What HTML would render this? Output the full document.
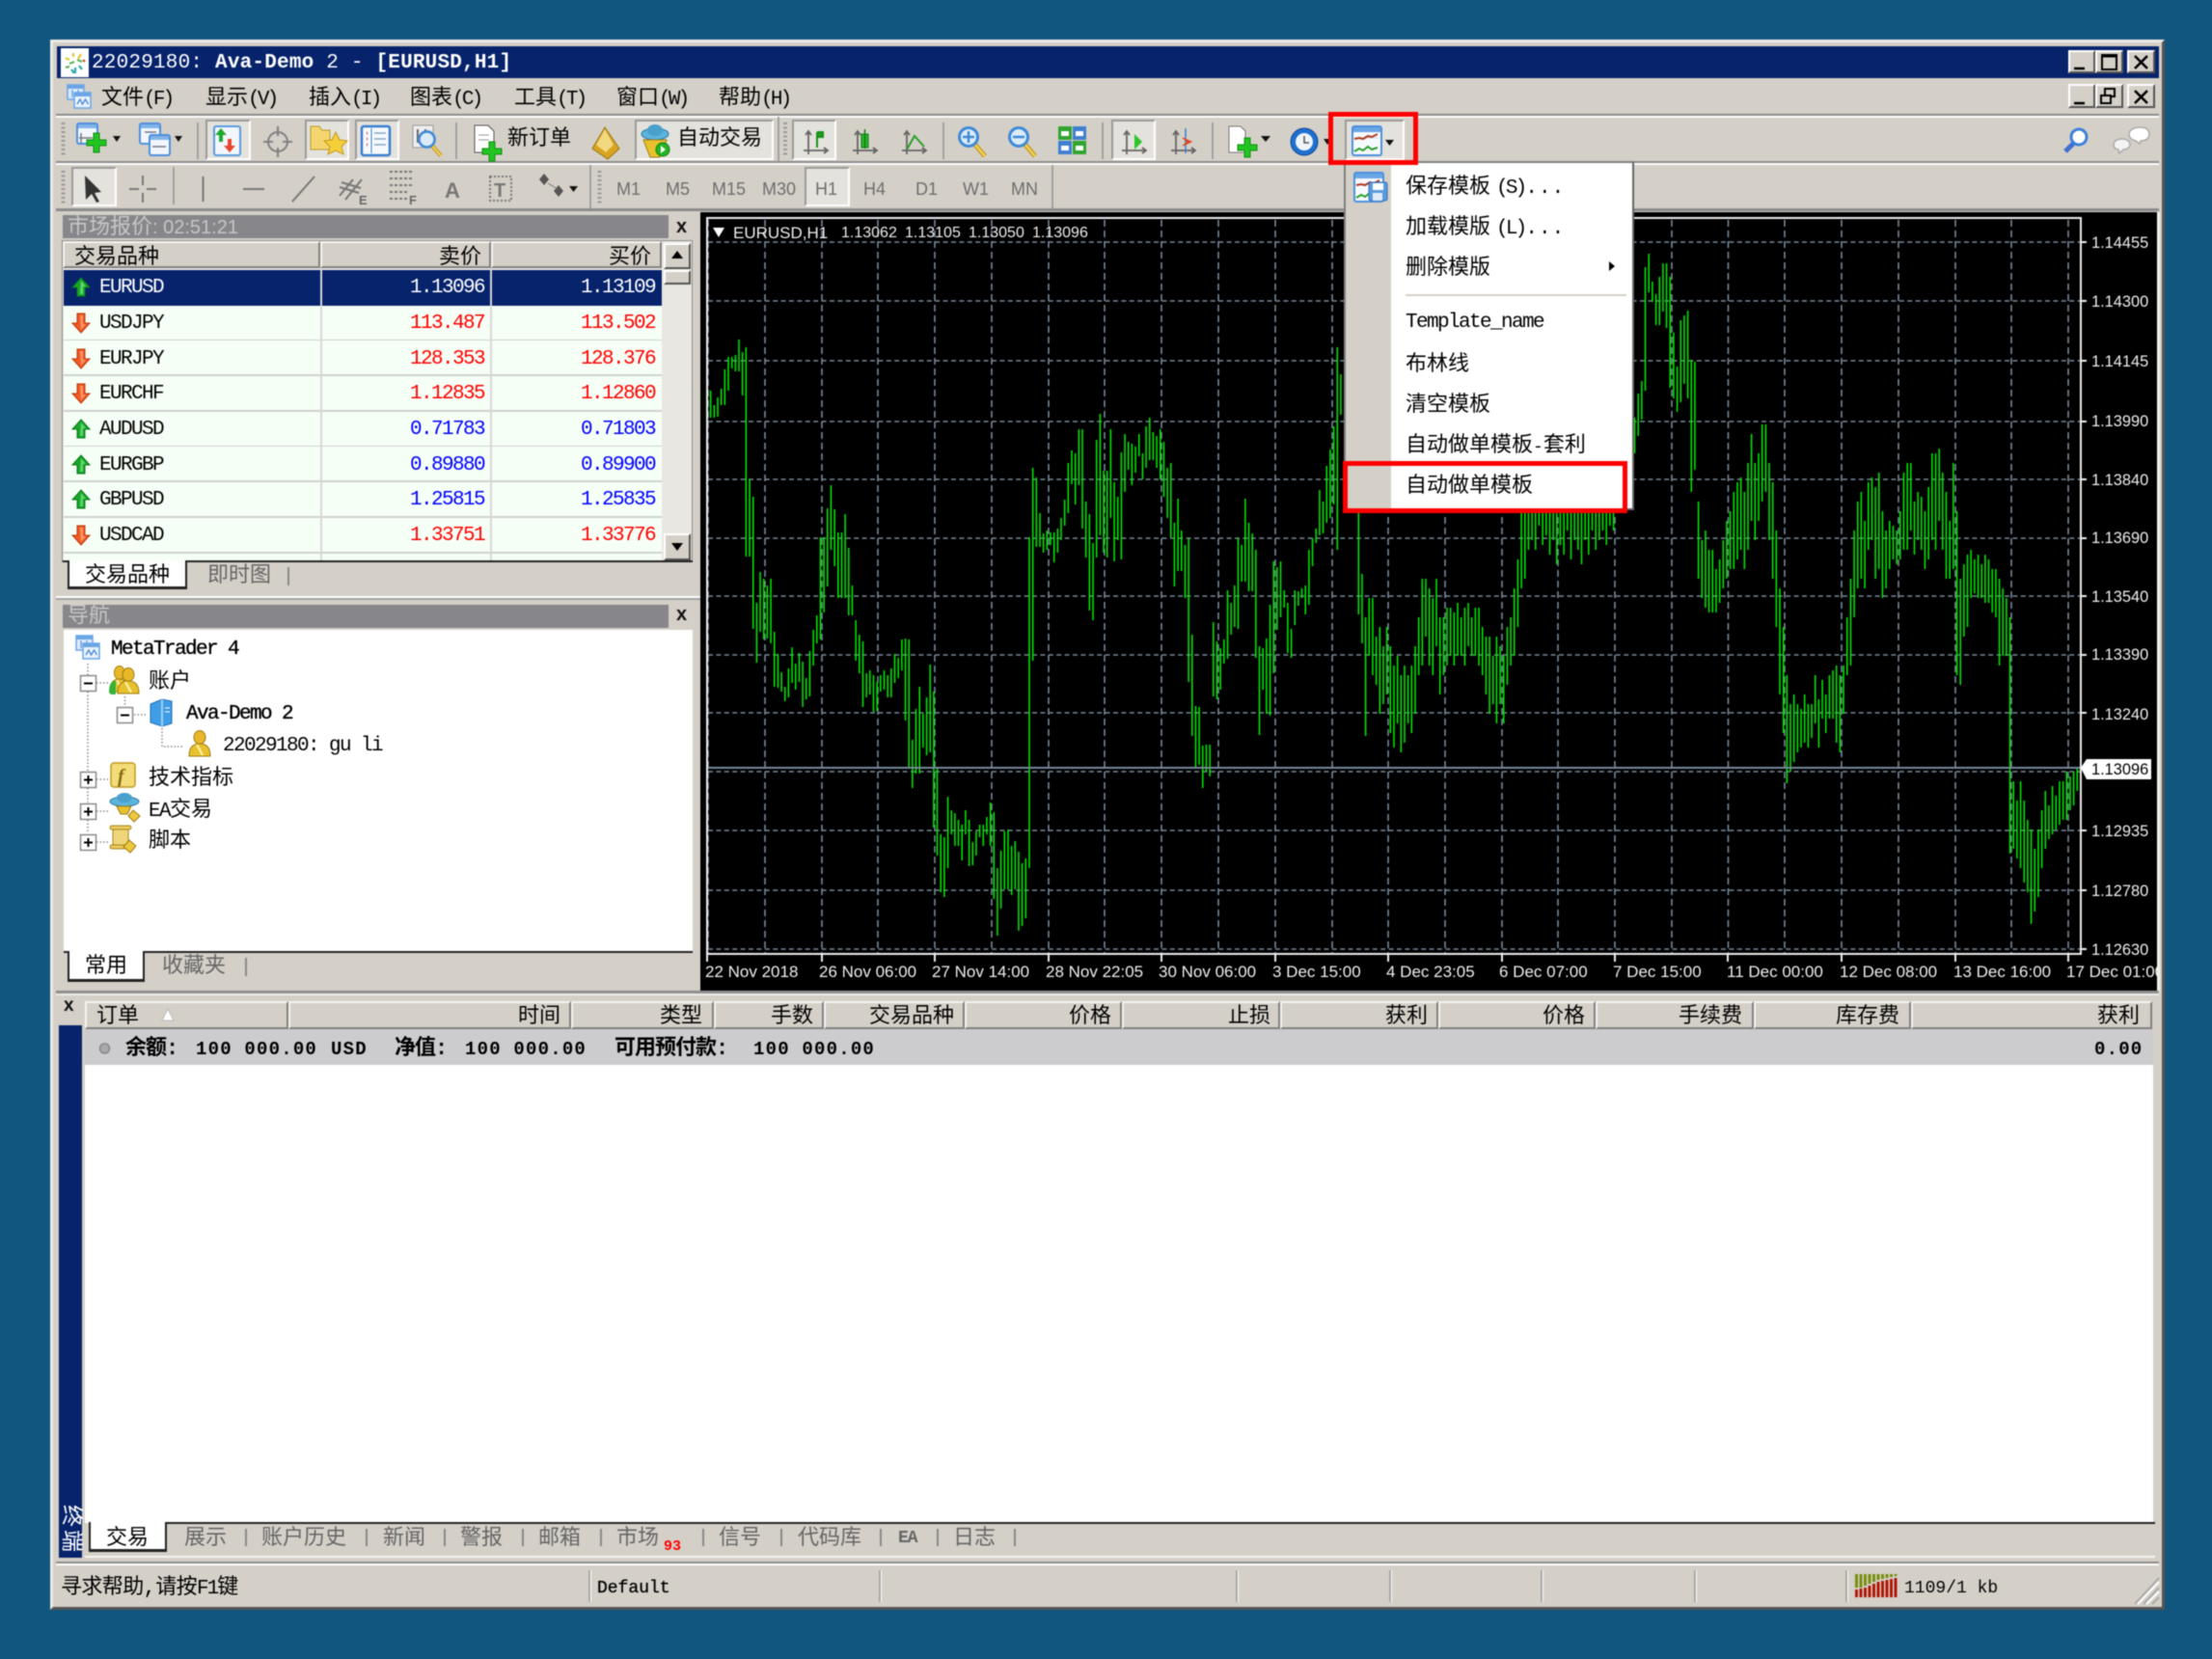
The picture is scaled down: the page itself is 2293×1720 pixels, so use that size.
<!DOCTYPE html>
<html lang="zh">
<head>
<meta charset="utf-8">
<title>MetaTrader 4</title>
<style>
html,body{margin:0;padding:0;width:2293px;height:1720px;overflow:hidden;background:#10567f}
#w{position:absolute;left:0;top:0;width:2293px;height:1720px;overflow:hidden;filter:blur(.45px)}
.a{position:absolute;box-sizing:border-box}
.t{position:absolute;white-space:nowrap;line-height:26px;font-size:22px;margin-top:2.5px;font-family:"Liberation Mono","Noto Sans CJK SC",monospace;color:#000}
.l{font-size:21px;letter-spacing:-1.6px}
.k{letter-spacing:-2.8px}
.g{color:#666}
.r{transform:translateX(-100%)}
.s{font-family:"Liberation Sans","Noto Sans CJK SC",sans-serif;font-size:17px;color:#eee}
.t.s{margin-top:.5px}
.m{font-family:"Liberation Sans",sans-serif;font-size:18px;color:#6e6e6e}
.t.m{margin-top:0}
.sb{font-weight:normal;-webkit-text-stroke:.35px #000}
.h{position:absolute;box-sizing:border-box;background:#d4d0c8;border-top:2px solid #f4f3f0;border-left:2px solid #f4f3f0;border-right:2px solid #808080;border-bottom:2px solid #808080}
.p{position:absolute;box-sizing:border-box;background:#e4e2dc;border-top:2px solid #9a9a9a;border-left:2px solid #9a9a9a;border-right:2px solid #fff;border-bottom:2px solid #fff}
.b{position:absolute;box-sizing:border-box;background:#d4d0c8;border-top:2px solid #fff;border-left:2px solid #fff;border-right:2px solid #555;border-bottom:2px solid #555}
.row{position:absolute;left:66px;width:620px;height:37px;background:#f6fff6;border-bottom:2px solid #d0d0d0;box-sizing:border-box}
.v{position:absolute;width:2px;background:#a8a8a8;border-right:1px solid #fff}
.tab{position:absolute;box-sizing:border-box;background:#fff;border-left:2px solid #222;border-right:2px solid #222;border-bottom:3px solid #222}
.x{position:absolute;font:bold 20px/20px "Liberation Sans",sans-serif;color:#111}
</style>
</head>
<body>
<div id="w">
<!-- window -->
<div class="a" style="left:52px;top:41px;width:2192px;height:1628px;background:#d4d0c8;border-top:3px solid #eceae6;border-left:3px solid #eceae6;border-right:3px solid #555;border-bottom:3px solid #555"></div>
<!-- title -->
<div class="a" style="left:59px;top:48px;width:2179px;height:33px;background:#07236b"></div>
<div class="a" style="left:63px;top:50px;width:29px;height:30px;background:#fff"></div>
<div class="t" style="left:95px;top:50px;color:#fff;font-size:21px;letter-spacing:.2px">22029180: <b>Ava-Demo</b> 2 - <b>[EURUSD,H1]</b></div>
<!-- window buttons -->
<div class="b" style="left:2144px;top:52px;width:28px;height:24px"></div>
<div class="b" style="left:2172px;top:52px;width:29px;height:24px"></div>
<div class="b" style="left:2205px;top:52px;width:29px;height:24px"></div>
<div class="b" style="left:2144px;top:87px;width:28px;height:25px"></div>
<div class="b" style="left:2172px;top:87px;width:29px;height:25px"></div>
<div class="b" style="left:2205px;top:87px;width:29px;height:25px"></div>
<!-- menu bar -->
<div class="t" style="left:105px;top:87px">文件<span class="l k">(F)</span></div>
<div class="t" style="left:213px;top:87px">显示<span class="l k">(V)</span></div>
<div class="t" style="left:320px;top:87px">插入<span class="l k">(I)</span></div>
<div class="t" style="left:425px;top:87px">图表<span class="l k">(C)</span></div>
<div class="t" style="left:533px;top:87px">工具<span class="l k">(T)</span></div>
<div class="t" style="left:639px;top:87px">窗口<span class="l k">(W)</span></div>
<div class="t" style="left:745px;top:87px">帮助<span class="l k">(H)</span></div>
<!-- grooves -->
<div class="a" style="left:58px;top:118px;width:2180px;height:2px;background:#8c8c8c"></div>
<div class="a" style="left:58px;top:120px;width:2180px;height:2px;background:#fff"></div>
<div class="a" style="left:58px;top:167px;width:2180px;height:2px;background:#8c8c8c"></div>
<div class="a" style="left:58px;top:169px;width:2180px;height:2px;background:#fff"></div>
<!-- pressed buttons -->
<div class="p" style="left:213px;top:124px;width:47px;height:42px"></div>
<div class="p" style="left:316px;top:124px;width:46px;height:42px"></div>
<div class="p" style="left:368px;top:124px;width:46px;height:42px"></div>
<div class="p" style="left:658px;top:124px;width:144px;height:42px"></div>
<div class="p" style="left:821px;top:124px;width:46px;height:42px"></div>
<div class="p" style="left:1152px;top:124px;width:46px;height:42px"></div>
<div class="p" style="left:1394px;top:124px;width:62px;height:42px"></div>
<div class="p" style="left:74px;top:173px;width:47px;height:41px"></div>
<div class="p" style="left:834px;top:173px;width:47px;height:41px"></div>
<div class="t" style="left:526px;top:129px">新订单</div>
<div class="t" style="left:702px;top:129px">自动交易</div>
<!-- timeframes -->
<div class="t m" style="left:639px;top:183px">M1</div>
<div class="t m" style="left:690px;top:183px">M5</div>
<div class="t m" style="left:738px;top:183px">M15</div>
<div class="t m" style="left:790px;top:183px">M30</div>
<div class="t m" style="left:845px;top:183px">H1</div>
<div class="t m" style="left:895px;top:183px">H4</div>
<div class="t m" style="left:949px;top:183px">D1</div>
<div class="t m" style="left:998px;top:183px">W1</div>
<div class="t m" style="left:1048px;top:183px">MN</div>
<div class="a" style="left:58px;top:216px;width:2180px;height:3px;background:#8c8c8c"></div>

<!-- market watch -->
<div class="a" style="left:65px;top:223px;width:628px;height:24px;background:#87868a"></div>
<div class="t" style="left:70px;top:220px;color:#c6c6c6">市场报价<span class="s" style="font-size:20px;color:#c6c6c6">: 02:51:21</span></div>
<div class="x" style="left:701px;top:225px">x</div>
<div class="a" style="left:64px;top:249px;width:654px;height:334px;background:#e9e7e2;border:1px solid #8a8a8a"></div>
<div class="h" style="left:65px;top:250px;width:267px;height:28px"></div>
<div class="h" style="left:332px;top:250px;width:177px;height:28px"></div>
<div class="h" style="left:509px;top:250px;width:177px;height:28px"></div>
<div class="t" style="left:77px;top:252px">交易品种</div>
<div class="t r" style="left:499px;top:252px">卖价</div>
<div class="t r" style="left:675px;top:252px">买价</div>
<div class="a" style="left:66px;top:280px;width:620px;height:37px;background:#07236b"></div>
<div class="row" style="top:317px"></div>
<div class="row" style="top:353px"></div>
<div class="row" style="top:390px"></div>
<div class="row" style="top:427px"></div>
<div class="row" style="top:463px"></div>
<div class="row" style="top:500px"></div>
<div class="row" style="top:537px"></div>
<div class="a" style="left:66px;top:574px;width:620px;height:8px;background:#f6fff6"></div>
<div class="a" style="left:332px;top:278px;width:2px;height:304px;background:#d8d8d8"></div>
<div class="a" style="left:508px;top:278px;width:2px;height:304px;background:#d8d8d8"></div>
<div class="b" style="left:688px;top:252px;width:28px;height:27px"></div>
<div class="b" style="left:688px;top:280px;width:28px;height:15px"></div>
<div class="b" style="left:688px;top:553px;width:28px;height:28px"></div>

<div class="t l" style="left:103px;top:283px;color:#fff">EURUSD</div>
<div class="t l" style="left:103px;top:320px">USDJPY</div>
<div class="t l" style="left:103px;top:357px">EURJPY</div>
<div class="t l" style="left:103px;top:393px">EURCHF</div>
<div class="t l" style="left:103px;top:430px">AUDUSD</div>
<div class="t l" style="left:103px;top:467px">EURGBP</div>
<div class="t l" style="left:103px;top:503px">GBPUSD</div>
<div class="t l" style="left:103px;top:540px">USDCAD</div>

<div class="t l r" style="left:502px;top:283px;color:#fff">1.13096</div><div class="t l r" style="left:679px;top:283px;color:#fff">1.13109</div>
<div class="t l r" style="left:502px;top:320px;color:#f00">113.487</div><div class="t l r" style="left:679px;top:320px;color:#f00">113.502</div>
<div class="t l r" style="left:502px;top:357px;color:#f00">128.353</div><div class="t l r" style="left:679px;top:357px;color:#f00">128.376</div>
<div class="t l r" style="left:502px;top:393px;color:#f00">1.12835</div><div class="t l r" style="left:679px;top:393px;color:#f00">1.12860</div>
<div class="t l r" style="left:502px;top:430px;color:#00f">0.71783</div><div class="t l r" style="left:679px;top:430px;color:#00f">0.71803</div>
<div class="t l r" style="left:502px;top:467px;color:#00f">0.89880</div><div class="t l r" style="left:679px;top:467px;color:#00f">0.89900</div>
<div class="t l r" style="left:502px;top:503px;color:#00f">1.25815</div><div class="t l r" style="left:679px;top:503px;color:#00f">1.25835</div>
<div class="t l r" style="left:502px;top:540px;color:#f00">1.33751</div><div class="t l r" style="left:679px;top:540px;color:#f00">1.33776</div>

<div class="a" style="left:65px;top:581px;width:653px;height:2px;background:#222"></div>
<div class="tab" style="left:70px;top:581px;width:124px;height:30px"></div>
<div class="t" style="left:88px;top:582px">交易品种</div>
<div class="t g" style="left:215px;top:582px">即时图</div>
<div class="a" style="left:298px;top:588px;width:2px;height:19px;background:#888"></div>
<div class="a" style="left:58px;top:618px;width:668px;height:2px;background:#fff"></div>
<div class="a" style="left:58px;top:620px;width:668px;height:2px;background:#a0a0a0"></div>

<!-- navigator -->
<div class="a" style="left:65px;top:627px;width:628px;height:24px;background:#87868a"></div>
<div class="t" style="left:70px;top:624px;color:#c6c6c6">导航</div>
<div class="x" style="left:701px;top:627px">x</div>
<div class="a" style="left:66px;top:653px;width:652px;height:334px;background:#fff"></div>
<div class="t l sb" style="left:115px;top:658px">MetaTrader 4</div>
<div class="t" style="left:154px;top:692px">账户</div>
<div class="t l sb" style="left:193px;top:725px">Ava-Demo 2</div>
<div class="t l" style="left:231px;top:758px">22029180: gu li</div>
<div class="t" style="left:154px;top:792px">技术指标</div>
<div class="t" style="left:154px;top:825px"><span class="l">EA</span>交易</div>
<div class="t" style="left:154px;top:857px">脚本</div>
<div class="a" style="left:66px;top:986px;width:652px;height:2px;background:#222"></div>
<div class="tab" style="left:70px;top:986px;width:80px;height:32px"></div>
<div class="t" style="left:88px;top:987px">常用</div>
<div class="t g" style="left:168px;top:987px">收藏夹</div>
<div class="a" style="left:254px;top:993px;width:2px;height:19px;background:#888"></div>

<!-- chart -->
<div class="a" style="left:726px;top:220px;width:1510px;height:807px;background:#000"></div>
<div class="a" style="left:2236px;top:220px;width:3px;height:810px;background:#f2f1ee"></div>
<div class="a" style="left:58px;top:1027px;width:2180px;height:3px;background:#8f8f8f"></div>
<div class="a" style="left:58px;top:1030px;width:2180px;height:2px;background:#eeece8"></div>
<svg class="a" style="left:0;top:0" width="2293" height="1720" viewBox="0 0 2293 1720">
<g fill="none" stroke="#778899" stroke-width="1.6">
<path stroke-dasharray="7 4" d="M734 228V989M793 228V989M852 228V989M910 228V989M969 228V989M1028 228V989M1087 228V989M1145 228V989M1204 228V989M1263 228V989M1322 228V989M1381 228V989M1439 228V989M1498 228V989M1557 228V989M1615 228V989M1674 228V989M1733 228V989M1791.500 228V989M1850 228V989M1909 228V989M1968 228V989M2027 228V989M2085 228V989M2144 228V989"/>
<path stroke-dasharray="5 3.4" d="M734 251H2157M734 312H2157M734 374H2157M734 437H2157M734 497H2157M734 558H2157M734 618H2157M734 679H2157M734 739H2157M734 800H2157M734 861H2157M734 923H2157M734 984H2157"/>
</g>
<path transform="translate(733,0) scale(3.67,1)" fill="none" stroke="#00e800" stroke-width=".42" d="M0 407V437M1 405V433M2 420V433M3 412V432M4 403V420M5 383V420M6 370V405M7 370V382M8 368V385M9 352V385M10 365V410M11 360V577M12 497V577M13 515V652M14 625V687M15 593V655M16 600V663M17 607V662M18 600V667M19 655V712M20 678V713M21 697V717M22 712V727M23 693V723M24 671V708M25 688V715M26 677V707M27 686V733M28 703V725M29 675V722M30 653V690M31 638V667M32 557V663M33 557V635M34 527V608M35 503V570M36 528V587M37 552V620M38 552V620M39 533V620M40 568V638M41 607V638M42 643V685M43 658V698M44 665V733M45 698V723M46 695V720M47 700V738M48 707V737M49 700V717M50 695V715M51 700V723M52 693V723M53 678V708M54 682V703M55 663V695M56 662V747M57 663V797M58 767V817M59 735V802M60 712V802M61 740V775M62 723V783M63 689V780M64 717V858M65 797V887M66 865V925M67 868V930M68 826V900M69 840V865M70 843V877M71 850V877M72 855V892M73 840V865M74 850V898M75 873V897M76 862V887M77 855V868M78 855V877M79 847V865M80 832V877M81 842V932M82 900V970M83 882V942M84 862V922M85 860V922M86 877V928M87 872V922M88 883V965M89 895V960M90 890V952M91 557V900M92 485V685M93 495V567M94 532V567M95 553V573M96 550V570M97 552V565M98 552V583M99 548V573M100 537V560M101 518V545M102 480V532M103 467V502M104 470V523M105 445V503M106 445V548M107 520V578M108 533V633M109 563V643M110 456V578M111 429V555M112 488V573M113 488V578M114 445V537M115 500V582M116 515V560M117 469V580M118 450V510M119 458V487M120 460V503M121 463V490M122 450V473M123 470V497M124 442V485M125 433V477M126 448V477M127 452V485M128 445V497M129 458V515M130 485V537M131 480V557M132 542V608M133 517V592M134 550V592M135 565V620M136 558V707M137 658V763M138 732V795M139 733V793M140 773V817M141 772V800M142 772V805M143 645V722M144 665V725M145 672V715M146 663V688M147 612V683M148 625V658M149 607V650M150 558V652M151 565V603M152 517V603M153 542V613M154 553V613M155 570V682M156 670V762M157 672V715M158 662V740M159 627V742M160 582V698M161 588V653M162 582V640M163 612V630M164 625V677M165 652V682M166 612V648M167 613V628M168 610V620M169 607V637M170 570V627M171 558V587M172 548V563M173 508V555M174 520V553M175 483V542M176 466V537M177 442V523M178 360V570M179 388V430M184 527V637M185 595V667M186 640V763M187 620V680M188 620V700M189 660V710M190 650V740M191 670V730M192 650V720M193 670V760M194 690V775M195 680V750M196 700V780M197 690V770M198 700V750M199 690V760M200 670V740M201 640V700M202 600V690M203 600V660M204 610V690M205 620V700M206 600V670M207 640V720M208 640V700M209 630V690M210 630V680M211 635V690M212 625V680M213 640V680M214 630V690M215 625V670M216 640V680M217 630V680M218 630V690M219 650V700M220 660V720M221 660V740M222 680V730M223 660V750M224 670V730M225 680V750M226 650V710M227 640V690M228 610V680M229 580V650M230 530V610M231 528V600M232 528V570M233 528V560M234 528V570M235 528V545M236 528V565M237 528V555M238 528V575M239 528V560M240 528V585M241 528V565M242 528V575M243 528V550M244 528V580M245 528V560M246 528V570M247 528V585M248 528V560M249 528V575M250 528V550M251 528V570M252 528V560M253 528V550M254 528V565M255 528V545M256 528V550M262 433V470M263 408V452M264 395V435M265 277V405M266 263V303M267 292V313M268 305V337M269 287V337M270 273V323M271 273V340M272 287V402M273 345V413M274 380V427M275 332V417M276 327V398M277 322V413M278 373V510M279 375V487M280 520V600M281 560V620M282 550V630M283 570V635M284 570V635M285 590V635M286 580V625M287 560V610M288 540V600M289 530V590M290 510V590M291 500V580M292 495V570M293 510V590M294 480V570M295 450V540M296 480V560M297 470V540M298 440V520M299 440V510M300 480V560M301 500V600M302 550V650M303 610V720M304 650V760M305 700V812M306 730V800M307 720V790M308 730V780M309 735V775M310 720V770M311 730V775M312 730V765M313 700V750M314 725V775M315 705V745M316 720V760M317 700V745M318 695V745M319 690V770M320 700V780M321 690V740M322 640V700M323 600V690M324 550V640M325 520V610M326 510V600M327 540V610M328 500V570M329 495V560M330 505V600M331 490V590M332 530V620M333 550V610M334 540V590M335 545V580M336 550V585M337 530V580M338 490V570M339 480V570M340 480V550M341 520V575M342 510V560M343 515V570M344 530V590M345 505V580M346 470V560M347 470V570M348 465V540M349 490V570M350 510V600M351 540V600M352 480V590M353 530V700M354 600V710M355 585V660M356 575V650M357 570V620M358 580V615M359 575V620M360 585V620M361 575V625M362 580V625M363 590V635M364 590V640M365 600V690M366 610V680M367 620V680M368 640V885M369 810V880M370 830V890M371 810V900M372 830V915M373 850V925M374 860V958M375 880V945M376 860V930M377 840V900M378 820V880M379 835V870M380 815V865M381 825V860M382 810V855M383 810V850M384 800V850M385 805V840M386 800V835M387 795V820"/>
<path stroke="#778899" stroke-width="2" d="M734 796H2157"/>
<rect x="733" y="226" width="1424" height="763" fill="none" stroke="#ededed" stroke-width="2"/>
<path stroke="#eee" stroke-width="2" d="M733 989V997M852 989V997M969 989V997M1087 989V997M1204 989V997M1322 989V997M1439 989V997M1557 989V997M1674 989V997M1791 989V997M1909 989V997M2027 989V997M2144 989V997M2157 251h6M2157 312h6M2157 374h6M2157 437h6M2157 497h6M2157 558h6M2157 618h6M2157 679h6M2157 739h6M2157 861h6M2157 923h6M2157 984h6"/>
<polygon points="739,236 751,236 745,246" fill="#fff"/>
<polygon points="2157,796 2163,787 2230,787 2230,808 2163,808" fill="#fff"/>
</svg>
<div class="t s" style="left:760px;top:228px">EURUSD,H1</div>
<div class="t s" style="left:872px;top:228px;font-size:16px">1.13062</div>
<div class="t s" style="left:938px;top:228px;font-size:16px">1.13105</div>
<div class="t s" style="left:1004px;top:228px;font-size:16px">1.13050</div>
<div class="t s" style="left:1070px;top:228px;font-size:16px">1.13096</div>

<div class="t s" style="left:2168px;top:238px;font-size:16.4px">1.14455</div>
<div class="t s" style="left:2168px;top:299px;font-size:16.4px">1.14300</div>
<div class="t s" style="left:2168px;top:361px;font-size:16.4px">1.14145</div>
<div class="t s" style="left:2168px;top:423px;font-size:16.4px">1.13990</div>
<div class="t s" style="left:2168px;top:484px;font-size:16.4px">1.13840</div>
<div class="t s" style="left:2168px;top:544px;font-size:16.4px">1.13690</div>
<div class="t s" style="left:2168px;top:605px;font-size:16.4px">1.13540</div>
<div class="t s" style="left:2168px;top:665px;font-size:16.4px">1.13390</div>
<div class="t s" style="left:2168px;top:727px;font-size:16.4px">1.13240</div>
<div class="t s" style="left:2168px;top:784px;font-size:16.4px;color:#000">1.13096</div>
<div class="t s" style="left:2168px;top:848px;font-size:16.4px">1.12935</div>
<div class="t s" style="left:2168px;top:910px;font-size:16.4px">1.12780</div>
<div class="t s" style="left:2168px;top:971px;font-size:16.4px">1.12630</div>

<div class="t s" style="left:731px;top:994px">22 Nov 2018</div>
<div class="t s" style="left:849px;top:994px">26 Nov 06:00</div>
<div class="t s" style="left:966px;top:994px">27 Nov 14:00</div>
<div class="t s" style="left:1084px;top:994px">28 Nov 22:05</div>
<div class="t s" style="left:1201px;top:994px">30 Nov 06:00</div>
<div class="t s" style="left:1319px;top:994px">3 Dec 15:00</div>
<div class="t s" style="left:1437px;top:994px">4 Dec 23:05</div>
<div class="t s" style="left:1554px;top:994px">6 Dec 07:00</div>
<div class="t s" style="left:1672px;top:994px">7 Dec 15:00</div>
<div class="t s" style="left:1790px;top:994px">11 Dec 00:00</div>
<div class="t s" style="left:1907px;top:994px">12 Dec 08:00</div>
<div class="t s" style="left:2025px;top:994px">13 Dec 16:00</div>
<div class="a" style="left:2142px;top:994px;width:94px;height:26px;overflow:hidden"><div class="t s" style="left:0;top:0">17 Dec 01:00</div></div>

<!-- terminal -->
<div class="x" style="left:66px;top:1033px;font-size:19px">x</div>
<div class="a" style="left:61px;top:1063px;width:24px;height:552px;background:#07236b"></div>
<div class="t" style="left:61px;top:1560px;width:24px;height:54px;color:#fff;font-size:23px;line-height:24px;margin-top:0;writing-mode:vertical-rl;text-orientation:sideways;letter-spacing:3px">终端</div>
<div class="h" style="left:88px;top:1038px;width:211px;height:29px"></div>
<div class="h" style="left:299px;top:1038px;width:293px;height:29px"></div>
<div class="h" style="left:592px;top:1038px;width:148px;height:29px"></div>
<div class="h" style="left:740px;top:1038px;width:114px;height:29px"></div>
<div class="h" style="left:854px;top:1038px;width:146px;height:29px"></div>
<div class="h" style="left:1000px;top:1038px;width:163px;height:29px"></div>
<div class="h" style="left:1163px;top:1038px;width:164px;height:29px"></div>
<div class="h" style="left:1327px;top:1038px;width:164px;height:29px"></div>
<div class="h" style="left:1491px;top:1038px;width:163px;height:29px"></div>
<div class="h" style="left:1654px;top:1038px;width:164px;height:29px"></div>
<div class="h" style="left:1818px;top:1038px;width:163px;height:29px"></div>
<div class="h" style="left:1981px;top:1038px;width:250px;height:29px"></div>
<div class="t" style="left:100px;top:1039px">订单</div>
<div class="t r" style="left:581px;top:1039px">时间</div>
<div class="t r" style="left:728px;top:1039px">类型</div>
<div class="t r" style="left:843px;top:1039px">手数</div>
<div class="t r" style="left:989px;top:1039px">交易品种</div>
<div class="t r" style="left:1152px;top:1039px">价格</div>
<div class="t r" style="left:1317px;top:1039px">止损</div>
<div class="t r" style="left:1480px;top:1039px">获利</div>
<div class="t r" style="left:1643px;top:1039px">价格</div>
<div class="t r" style="left:1806px;top:1039px">手续费</div>
<div class="t r" style="left:1969px;top:1039px">库存费</div>
<div class="t r" style="left:2218px;top:1039px">获利</div>

<div class="a" style="left:88px;top:1067px;width:2144px;height:37px;background:#cccbce"></div>
<div class="a" style="left:88px;top:1104px;width:2144px;height:475px;background:#fff"></div>
<div class="t" style="left:130px;top:1072px;font-weight:bold;letter-spacing:-1px">余额:</div>
<div class="t l" style="left:203px;top:1072px;font-weight:bold;font-size:19px;letter-spacing:1.2px">100 000.00</div>
<div class="t l" style="left:343px;top:1072px;font-weight:bold;font-size:19px;letter-spacing:1.2px">USD</div>
<div class="t" style="left:409px;top:1072px;font-weight:bold;letter-spacing:-1px">净值:</div>
<div class="t l" style="left:482px;top:1072px;font-weight:bold;font-size:19px;letter-spacing:1.2px">100 000.00</div>
<div class="t" style="left:637px;top:1072px;font-weight:bold;letter-spacing:-1px">可用预付款:</div>
<div class="t l" style="left:781px;top:1072px;font-weight:bold;font-size:19px;letter-spacing:1.2px">100 000.00</div>
<div class="t l" style="left:2171px;top:1072px;font-weight:bold;font-size:19px;letter-spacing:1.2px">0.00</div>

<div class="a" style="left:92px;top:1578px;width:2142px;height:2px;background:#222"></div>
<div class="tab" style="left:92px;top:1578px;width:81px;height:31px"></div>
<div class="t" style="left:110px;top:1580px">交易</div>
<div class="t g" style="left:191px;top:1580px">展示</div>
<div class="t g" style="left:271px;top:1580px">账户历史</div>
<div class="t g" style="left:397px;top:1580px">新闻</div>
<div class="t g" style="left:477px;top:1580px">警报</div>
<div class="t g" style="left:558px;top:1580px">邮箱</div>
<div class="t g" style="left:639px;top:1580px">市场</div>
<div class="t l" style="left:688px;top:1588px;font-size:15px;font-weight:bold;color:#f00;letter-spacing:0">93</div>
<div class="t g" style="left:745px;top:1580px">信号</div>
<div class="t g" style="left:827px;top:1580px">代码库</div>
<div class="t g l" style="left:931px;top:1579px;font-weight:bold;font-size:18px;letter-spacing:-1px">EA</div>
<div class="t g" style="left:988px;top:1580px">日志</div>
<div class="a" style="left:254px;top:1585px;width:2px;height:18px;background:#888"></div>
<div class="a" style="left:379px;top:1585px;width:2px;height:18px;background:#888"></div>
<div class="a" style="left:460px;top:1585px;width:2px;height:18px;background:#888"></div>
<div class="a" style="left:541px;top:1585px;width:2px;height:18px;background:#888"></div>
<div class="a" style="left:622px;top:1585px;width:2px;height:18px;background:#888"></div>
<div class="a" style="left:728px;top:1585px;width:2px;height:18px;background:#888"></div>
<div class="a" style="left:809px;top:1585px;width:2px;height:18px;background:#888"></div>
<div class="a" style="left:912px;top:1585px;width:2px;height:18px;background:#888"></div>
<div class="a" style="left:971px;top:1585px;width:2px;height:18px;background:#888"></div>
<div class="a" style="left:1051px;top:1585px;width:2px;height:18px;background:#888"></div>
<div class="a" style="left:88px;top:1613px;width:2146px;height:2px;background:#f4f3f0"></div>
<div class="a" style="left:58px;top:1619px;width:2180px;height:2px;background:#8c8c8c"></div>
<div class="a" style="left:58px;top:1621px;width:2180px;height:2px;background:#fff"></div>

<!-- status -->
<div class="t" style="left:63px;top:1631px;letter-spacing:-.6px">寻求帮助,请按<span class="l" style="letter-spacing:-2px">F1</span>键</div>
<div class="v" style="left:610px;top:1628px;height:33px"></div>
<div class="v" style="left:911px;top:1628px;height:33px"></div>
<div class="v" style="left:1281px;top:1628px;height:33px"></div>
<div class="v" style="left:1440px;top:1628px;height:33px"></div>
<div class="v" style="left:1597px;top:1628px;height:33px"></div>
<div class="v" style="left:1756px;top:1628px;height:33px"></div>
<div class="v" style="left:1913px;top:1628px;height:33px"></div>
<div class="t l" style="left:619px;top:1631px;font-size:18px;-webkit-text-stroke:.3px #000;letter-spacing:0">Default</div>
<div class="t l" style="left:1974px;top:1631px;font-size:18px;letter-spacing:0">1109/1 kb</div>

<!-- icons -->
<svg class="a" style="left:0;top:0" width="2293" height="1720" viewBox="0 0 2293 1720">
<defs>
<g id="win"><rect x="1" y="1" width="21" height="21" rx="2" fill="#f2f7fd" stroke="#4d8fdc" stroke-width="2"/><rect x="2" y="2" width="19" height="4" fill="#82b4ea"/></g>
<g id="mt"><rect x="1" y="1" width="17" height="15" fill="#dcebfb" stroke="#6aa5e6" stroke-width="1.5"/><rect x="1" y="1" width="17" height="4" fill="#6aa5e6"/><path d="M6 6v8M12 6v8" stroke="#4a86d8"/><rect x="8" y="9" width="17" height="16" fill="#e8f2fd" stroke="#6aa5e6" stroke-width="1.5"/><rect x="8" y="9" width="17" height="4" fill="#6aa5e6"/><path d="M11 21l3-5 2.500 5 3-5 3 5" fill="none" stroke="#4a86d8" stroke-width="1.300"/></g>
<path id="pl" d="M7 0h6v7h7v6h-7v7H7v-7H0V7h7z" fill="#22c422" stroke="#0f8f0f"/>
<g id="up"><path d="M9 0L18 10H13V19H5V10H0Z" fill="#1aa52c" stroke="#0b7a1a"/><path d="M9 3L14 9H11V17H8Z" fill="#5fd86c"/></g>
<g id="dn"><path d="M9 20L18 10H13V0H5V10H0Z" fill="#ef5a24" stroke="#b93a10"/><path d="M9 17L14 11H11V2H8Z" fill="#ff9468"/></g>
<g id="ax"><path d="M5 0V24M0 20H25M2 4L5 0L8 4M21 17L25 20L21 23" fill="none" stroke="#666" stroke-width="1.800"/></g>
<g id="mag"><path d="M16 17L27 30" stroke="#c49a1a" stroke-width="5"/><path d="M16 17L27 30" stroke="#f0d060" stroke-width="2.500"/><circle cx="10" cy="10" r="9.500" fill="#dcebf9" stroke="#3f8ad6" stroke-width="3"/></g>
<g id="per"><ellipse cx="12" cy="7.500" rx="6" ry="7" fill="#e8b82a" stroke="#a07c10"/><path d="M1 27C1 17 6 14 12 14C18 14 23 17 23 27Z" fill="#e8c22e" stroke="#a07c10"/><path d="M9 15L15 26" stroke="#fff3b0" stroke-width="2"/></g>
<g id="bm"><rect x=".5" y=".5" width="16" height="16" fill="#fff" stroke="#8a8a8a" stroke-width="1.500"/><path d="M4 8.500H13" stroke="#000" stroke-width="2"/></g>
<g id="bp"><rect x=".5" y=".5" width="16" height="16" fill="#fff" stroke="#8a8a8a" stroke-width="1.500"/><path d="M4 8.500H13M8.500 4V13" stroke="#000" stroke-width="2"/></g>
<g id="tpl"><rect x="1" y="1" width="30" height="30" rx="2" fill="#f6f9fd" stroke="#4d8fdc" stroke-width="2"/><rect x="2" y="2" width="28" height="5" fill="#6aa5e6"/><path d="M3 13H28" stroke="#d0d8e0"/><path d="M3 14l5-1 4 1 5-3 4 1 6-3" fill="none" stroke="#b03a20" stroke-width="2"/><path d="M3 27l5-3 4 2 5-4 4 3 6-2" fill="none" stroke="#2aa02a" stroke-width="2"/></g>
</defs>

<!-- title icon dots -->
<g fill="none" stroke-width="2.200"><path stroke="#e0c838" d="M68 60l4 2M84 56l-3 5M76 55v4"/><path stroke="#5cb85c" d="M72 66l5-2M80 62l5 2M68 70l4-1"/><path stroke="#2aa6a6" d="M74 72l3 4M82 68l3 4M78 70v6"/><path stroke="#d0503a" d="M86 62l2 2"/></g>
<!-- win buttons glyphs -->
<g stroke="#000" fill="none"><path stroke-width="2.500" d="M2150 71h11M2150 107h11"/><rect x="2179" y="57" width="15" height="15" stroke-width="2"/><path stroke-width="3" d="M2179 58h15"/><path stroke-width="2.500" d="M2213 58l13 13M2226 58l-13 13M2213 94l13 13M2226 94l-13 13"/><rect x="2182" y="92" width="10" height="8" stroke-width="2"/><rect x="2178" y="99" width="10" height="8" fill="#d4d0c8" stroke-width="2"/></g>
<use href="#mt" x="69" y="87"/>

<!-- grips -->
<g stroke="#9a9a9a" stroke-width="4" stroke-dasharray="2 2.500" fill="none"><path d="M65.500 127V162M814 127V162M65.500 177V212M621.500 177V212"/></g>
<g stroke="#9c9c9c" stroke-width="1.800"><path d="M205 127V165M473 127V165M978 127V165M1143 127V165M1257 127V165M180 173V212M612 171V216M1091 171V216M807 121V167"/></g>

<!-- toolbar1 -->
<use href="#win" x="79" y="127"/><path d="M84 138v10M82 143h14" stroke="#777" fill="none" stroke-width="1.500"/><use href="#pl" x="90" y="138"/>
<polygon points="117,141 125,141 121,147" fill="#111"/>
<use href="#win" x="144" y="127"/><use href="#win" x="154" y="139"/><path d="M150 137h12M158 152h14" stroke="#778" fill="none" stroke-width="1.500"/>
<polygon points="181,141 189,141 185,147" fill="#111"/>
<rect x="222" y="131" width="27" height="30" rx="2" fill="#f2f7fd" stroke="#5a9ade" stroke-width="2"/>
<path d="M229 133l6 7h-4v7h-4v-7h-4z" fill="#1fa82e"/><path d="M238 158l6-7h-4v-7h-4v7h-4z" fill="#e8452a"/>
<g fill="none" stroke="#808080" stroke-width="2"><circle cx="288" cy="147" r="10"/><path d="M288 131v10M288 153v10M273 147h10M293 147h10"/></g>
<path d="M322 131h9l3 4h8v20h-20z" fill="#f3d66e" stroke="#b89a30"/><path d="M348 137l4 8 8 1-6 6 2 8-8-4-8 4 2-8-6-6 8-1z" fill="#f5cf3a" stroke="#c49a1a"/>
<rect x="375" y="131" width="29" height="30" rx="2" fill="#f6f9fd" stroke="#3a7fd0" stroke-width="2.500"/><path d="M385 133v26" stroke="#3a7fd0"/><path d="M380 138h1M380 144h1M380 150h1" stroke="#d04040" stroke-width="2.500"/><path d="M388 138h12M388 144h12M388 150h12" stroke="#8aa6c8" stroke-width="1.500"/>
<rect x="428" y="130" width="21" height="23" fill="#eee" stroke="#999"/><path d="M433 134v14M441 134v14" stroke="#666" stroke-width="2"/><g transform="translate(434,136) scale(.85)"><use href="#mag"/></g>
<path d="M492 130h14l6 6v22h-20z" fill="#fff" stroke="#555"/><path d="M496 140h11M496 145h11" stroke="#999"/><use href="#pl" x="500" y="147"/>
<path d="M627 132L642 154L630 165L614 154Z" fill="#d8a420" stroke="#9a7410"/><path d="M627 134L636 150L628 158L618 150Z" fill="#f2d880"/>
<ellipse cx="679" cy="139" rx="14" ry="6" fill="#5cb4dc" stroke="#2a7ca4"/><ellipse cx="679" cy="135" rx="8" ry="6" fill="#4aa0cc"/><path d="M667 145h24l-7 18h-10z" fill="#e8c22e" stroke="#a07c10"/><circle cx="687" cy="155" r="7" fill="#22b422" stroke="#0f7f0f"/><path d="M685 151l5 4-5 4z" fill="#fff"/>
<use href="#ax" x="833" y="136"/><path d="M847 137v16M847 137h6v5h-6" fill="#22a022" stroke="#1a901a" stroke-width="2"/>
<use href="#ax" x="884" y="136"/><rect x="893" y="139" width="7" height="14" fill="#2cb52c" stroke="#0f7f0f"/><path d="M896.500 134v20" stroke="#0f7f0f" stroke-width="1.500"/>
<use href="#ax" x="935" y="136"/><path d="M940 155L948 141L958 152" fill="none" stroke="#2aa02a" stroke-width="2"/>
<use href="#mag" x="994" y="132"/><path d="M998 142h12M1004 136v12" stroke="#3f8ad6" stroke-width="2.500"/>
<use href="#mag" x="1046" y="132"/><path d="M1050 142h12" stroke="#3f8ad6" stroke-width="2.500"/>
<g><rect x="1097" y="131" width="14" height="14" fill="#2fa52f"/><rect x="1112" y="131" width="14" height="14" fill="#3f7fd0"/><rect x="1097" y="146" width="14" height="14" fill="#3f7fd0"/><rect x="1112" y="146" width="14" height="14" fill="#2fa52f"/><path d="M1100 136h8v5h-8zM1115 136h8v5h-8zM1100 151h8v5h-8zM1115 151h8v5h-8z" fill="#fff"/></g>
<use href="#ax" x="1163" y="136"/><path d="M1176 139l8 8-8 8z" fill="#2cc52c"/>
<use href="#ax" x="1214" y="136"/><path d="M1229 133v26" stroke="#3a7fd0" stroke-width="1.500"/><path d="M1231 147l-5-4 9 4-9 4z" fill="#e04020" stroke="#e04020"/>
<path d="M1274 131h12l5 5v22h-17z" fill="#fff" stroke="#777"/><use href="#pl" x="1283" y="143"/><polygon points="1307,141 1317,141 1312,147" fill="#111"/>
<circle cx="1352" cy="147" r="14" fill="#1f6fd0" stroke="#144a98"/><circle cx="1352" cy="147" r="9" fill="#eef4f8"/><path d="M1352 141v7h5" stroke="#555" fill="none" stroke-width="1.500"/><polygon points="1372,144 1380,144 1376,150" fill="#111"/>
<g transform="translate(1401,130)"><use href="#tpl"/></g><polygon points="1436,145 1445,145 1440.500,151" fill="#111"/>

<!-- right icons -->
<circle cx="2155" cy="142" r="8" fill="#fff" stroke="#3f7fdc" stroke-width="3"/><path d="M2149 149L2141 157" stroke="#3f6fd0" stroke-width="5"/>
<path d="M2219 132c-9 0-12 4-12 7c0 4 3 6 7 7l4 3l1-3c6 0 9-3 9-7c0-4-3-7-9-7z" fill="#fff" stroke="#aaa" stroke-width="1.500"/>
<path d="M2200 144c-6 0-9 3-9 6c0 3 2 5 5 5l1 4l4-4c5 0 7-3 7-5c0-3-3-6-8-6z" fill="#f4f4f4" stroke="#aaa" stroke-width="1.500"/>

<!-- toolbar2 -->
<polygon points="88,182 105,199 98,200 103,209 100,210 95,201 89,207" fill="#333"/>
<g stroke="#777" stroke-width="2" fill="none"><path d="M148 182v10M148 200v10M134 196h10M152 196h10M210.500 183v26M252 196h22M303 209L326 183M352 203L366 186M358 207L375 186M352 194L372 200M354 189L374 195"/><path stroke-dasharray="3 2" d="M404 178h25M404 185h25M404 192h25M404 199h18M404 206h18"/><rect x="508" y="183" width="22" height="25" stroke-dasharray="2 2"/></g>
<text x="372" y="212" font-family="Liberation Sans" font-size="13" font-weight="bold" fill="#666">E</text>
<text x="424" y="212" font-family="Liberation Sans" font-size="13" font-weight="bold" fill="#666">F</text>
<text x="461" y="205" font-family="Liberation Sans" font-size="22" font-weight="bold" fill="#777">A</text>
<text x="512" y="204" font-family="Liberation Sans" font-size="20" font-weight="bold" fill="#777">T</text>
<path d="M564 180l5 6-5 6-5-6zM579 192l5 6-5 6-5-6z" fill="#555"/><path d="M568 190L578 196" stroke="#777"/><polygon points="590,193 599,193 594.500,199" fill="#111"/>

<!-- scrollbar arrows, wm arrows -->
<polygon points="702,260 696,268 708,268" fill="#000"/><polygon points="696,563 708,563 702,571" fill="#000"/>
<use href="#up" x="75" y="288"/><use href="#dn" x="75" y="325"/><use href="#dn" x="75" y="362"/><use href="#dn" x="75" y="398"/><use href="#up" x="75" y="435"/><use href="#up" x="75" y="472"/><use href="#up" x="75" y="508"/><use href="#dn" x="75" y="545"/>

<!-- tree -->
<g stroke="#888" stroke-width="1.500" stroke-dasharray="1.500 2" fill="none"><path d="M91 688V700M91 717V799M91 817V832M91 850V864M100 708h12M100 808h12M100 841h12M100 873h12M129.500 722V732M139 741h14M168 755V774H190"/></g>
<use href="#mt" x="78" y="658"/>
<use href="#bm" x="83" y="700"/><use href="#bm" x="121" y="733"/><use href="#bp" x="83" y="800"/><use href="#bp" x="83" y="833"/><use href="#bp" x="83" y="865"/>
<g transform="translate(113,690) scale(.9 1)"><use href="#per" fill="#3a3"/></g><g transform="translate(121,692)"><use href="#per"/></g>
<path d="M113 718c0-10 3-12 7-12v14h-5z" fill="#36b336"/>
<path d="M156 730l12-5 10 2v23l-10 3-12-4z" fill="#3f9de8" stroke="#1f6fb8"/><path d="M168 725v28" stroke="#9fd0f5" stroke-width="2"/><path d="M171 734h5M171 738h5" stroke="#fff"/>
<g transform="translate(195,757)"><use href="#per"/></g>
<rect x="115" y="791" width="25" height="25" rx="3" fill="#f3dc7a" stroke="#c09a20" stroke-width="1.500"/><text x="122" y="811" font-family="Liberation Serif" font-style="italic" font-weight="bold" font-size="20" fill="#8a6a10">f</text>
<ellipse cx="129" cy="831" rx="15" ry="5" fill="#5cb4dc" stroke="#2a7ca4"/><ellipse cx="129" cy="827" rx="8" ry="5" fill="#4aa0cc"/><path d="M121 836h15l-4 8h-7z" fill="#e8c22e" stroke="#a07c10"/><path d="M138 840l7 6-6 6-6-6z" fill="#edc940" stroke="#a07c10"/>
<rect x="117" y="858" width="16" height="20" fill="#f0d67a" stroke="#a8881c"/><rect x="114" y="856" width="22" height="4" rx="2" fill="#e8c860" stroke="#a8881c"/><rect x="114" y="876" width="22" height="4" rx="2" fill="#e8c860" stroke="#a8881c"/><path d="M134 871l7 6-6 7-7-6z" fill="#edc940" stroke="#a07c10"/>

<!-- order sort + balance dot -->
<path d="M174 1046l6 12h-12z" fill="#fff" stroke="#bbb"/>
<circle cx="108.500" cy="1087" r="5" fill="#aaa" stroke="#888" stroke-width="1.500"/>
<!-- connection -->
<g stroke-width="3"><path stroke="#7a8f10" d="M1924.500 1632V1646M1929 1632V1646M1933.500 1632V1644M1938 1632V1642M1942.500 1632V1640M1947 1632V1638M1951.500 1632V1637M1956 1632V1636M1960.500 1632V1635M1965 1632V1634"/><path stroke="#b01808" d="M1924.500 1648V1656M1929 1647V1656M1933.500 1646V1656M1938 1644V1656M1942.500 1642V1656M1947 1640V1656M1951.500 1639V1656M1956 1638V1656M1960.500 1637V1656M1965 1636V1656"/></g>
<g stroke-width="2"><path stroke="#aaa" d="M2213 1663L2238 1636M2222 1663L2238 1646M2231 1663L2238 1656"/><path stroke="#fff" d="M2216 1663L2238 1640M2225 1663L2238 1650"/></g>
</svg>

<!-- popup menu -->
<div class="a" style="left:1393px;top:167px;width:301px;height:362px;background:#fff;border:2px solid #7e7e7e;border-right-color:#666;border-bottom-color:#666"></div>
<div class="a" style="left:1395px;top:169px;width:47px;height:358px;background:#d4d0c8"></div>
<div class="t" style="left:1457px;top:179px">保存模板<span class="l k" style="margin-left:6px">(S)</span><span class="l" style="letter-spacing:1px;margin-left:1px">...</span></div>
<div class="t" style="left:1457px;top:221px">加载模版<span class="l k" style="margin-left:6px">(L)</span><span class="l" style="letter-spacing:1px;margin-left:1px">...</span></div>
<div class="t" style="left:1457px;top:263px">删除模版</div>
<div class="a" style="left:1457px;top:305px;width:229px;height:2px;background:#d4d0c8"></div>
<div class="t l" style="left:1457px;top:319px">Template_name</div>
<div class="t" style="left:1457px;top:363px">布林线</div>
<div class="t" style="left:1457px;top:405px">清空模板</div>
<div class="t" style="left:1457px;top:447px">自动做单模板<span style="font-size:18px">-</span>套利</div>
<div class="t" style="left:1457px;top:489px">自动做单模板</div>
<svg class="a" style="left:1393px;top:167px" width="80" height="120" viewBox="0 0 80 120">
<g transform="translate(10,11)"><use href="#tpl"/></g>
<rect x="26" y="22" width="19" height="19" rx="2" fill="#5a9ade" stroke="#2f6fb8"/><rect x="30" y="23" width="11" height="7" fill="#fff"/><rect x="30" y="33" width="10" height="8" fill="#e0ecf8"/>
</svg>
<svg class="a" style="left:1664px;top:268px" width="12" height="16" viewBox="0 0 12 16"><polygon points="4,3 10,8 4,13" fill="#000"/></svg>
<!-- highlights -->
<div class="a" style="left:1377px;top:116px;width:93px;height:55px;border:5px solid #f00"></div>
<div class="a" style="left:1392px;top:478px;width:295px;height:54px;border:5px solid #f00"></div>
</div>
</body>
</html>
